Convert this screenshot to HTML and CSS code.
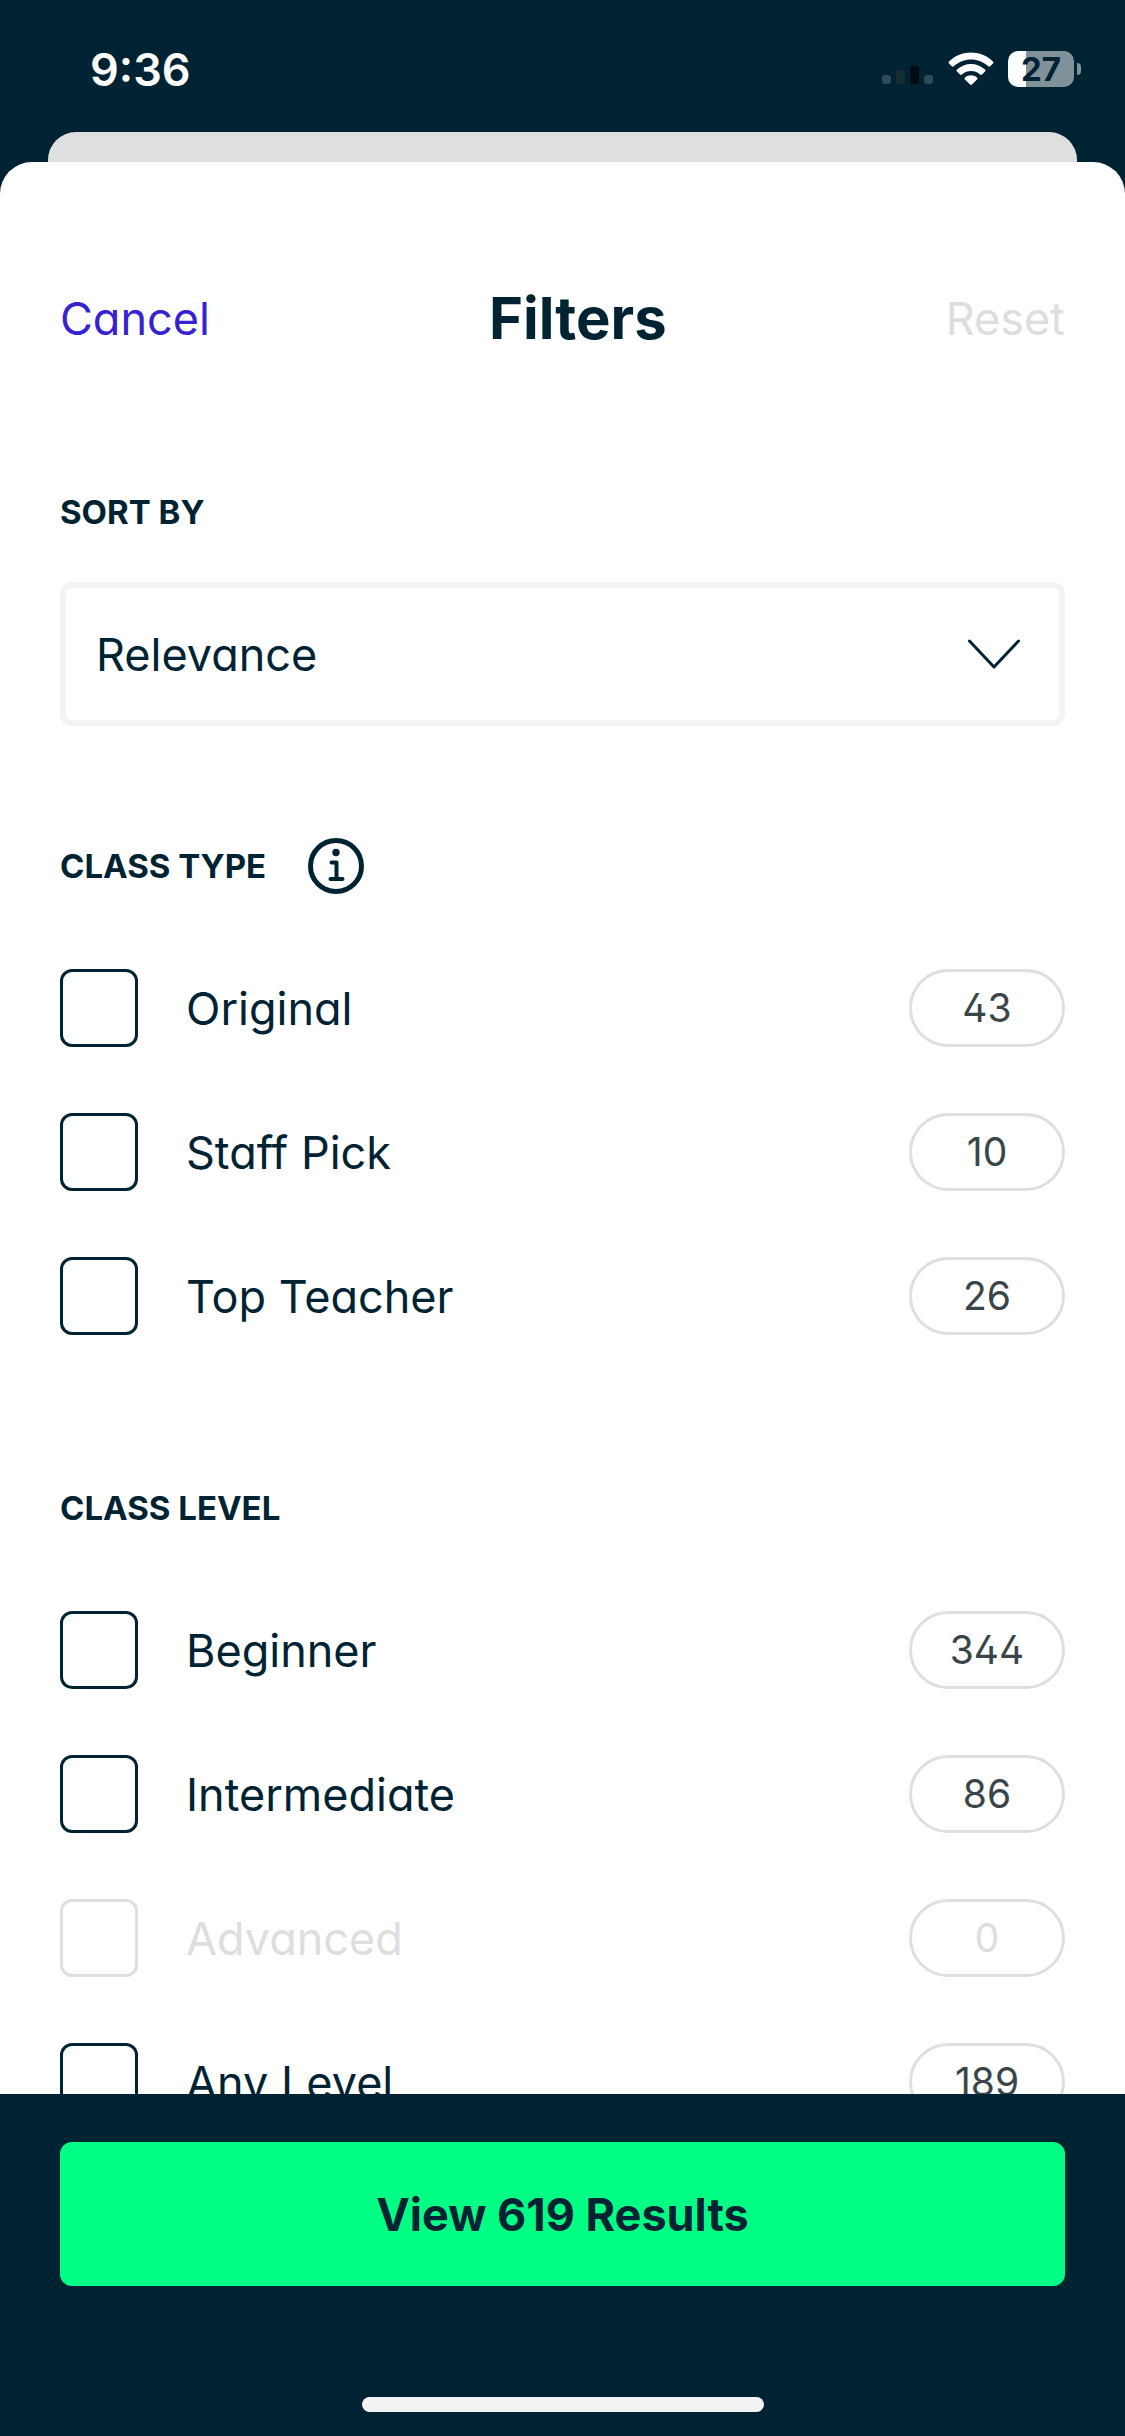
FILE: index.html
```html
<!DOCTYPE html>
<html lang="en">
<head>
  <meta charset="UTF-8">
  <meta name="viewport" content="width=device-width, initial-scale=1.0">
  <title>Filters</title>
  <link rel="stylesheet" href="styles.css">
</head>
<body>
  <div class="status-bar">
    <span class="time">9:36</span>
    <div class="status-icons">
      <svg class="signal" width="52" height="34" viewBox="0 0 52 34" aria-hidden="true">
        <rect x="0" y="23" width="9" height="9" rx="3" fill="#2b4a5b"/>
        <rect x="14" y="18" width="9" height="14" rx="3" fill="#182c34"/>
        <rect x="28" y="14" width="9" height="18" rx="3" fill="#000c14"/>
        <rect x="42" y="23" width="9" height="9" rx="3" fill="#2b4a5b"/>
      </svg>
      <svg class="wifi" width="46" height="34" viewBox="0 0 46 34" aria-hidden="true">
        <path d="M1 9.5C13-2.5 33-2.5 45 9.5c.6.6.6 1.400 0 2l-2.800 2.800c-.6.6-1.300.6-1.900 0C30.700 5.100 15.300 5.100 5.700 14.300c-.6.6-1.300.6-1.900 0L1 11.500c-.6-.6-.6-1.400 0-2z"/>
        <path d="M9 17.600c7.800-7.500 20.200-7.500 28 0 .6.6.6 1.300 0 1.900l-3 3c-.6.6-1.300.5-1.900 0-5.200-4.600-13-4.600-18.200 0-.6.5-1.300.6-1.900 0l-3-3c-.6-.6-.6-1.300 0-1.900z"/>
        <path d="M17 25.600c3.400-3 8.600-3 12 0 .6.600.600 1.200.1 1.800l-5.200 5.200c-.6.6-1.200.6-1.800 0l-5.200-5.200c-.5-.6-.5-1.200.1-1.800z"/>
      </svg>
      <div class="battery">
        <span class="battery-level">27</span>
        <span class="battery-cap"></span>
      </div>
    </div>
  </div>

  <div class="back-card"></div>

  <main class="sheet">
    <header class="sheet-header">
      <button class="link-btn" type="button">Cancel</button>
      <h1>Filters</h1>
      <button class="link-btn" type="button" disabled>Reset</button>
    </header>

    <section class="sort-by">
      <h2 class="section-title"><label for="sort">SORT BY</label></h2>
      <div class="select-box">
        <select id="sort">
          <option selected>Relevance</option>
          <option>Newest</option>
          <option>Popular</option>
        </select>
        <svg class="chevron" width="54" height="32" viewBox="0 0 54 32" aria-hidden="true">
          <path d="M2.500 3L27 29L51.500 3"/>
        </svg>
      </div>
    </section>

    <section class="option-group">
      <h2 class="section-title">
        CLASS TYPE
        <button class="info-btn" type="button" aria-label="About class types">
          <svg width="56" height="56" viewBox="0 0 56 56" aria-hidden="true">
            <circle cx="28" cy="28" r="25.500" fill="none" stroke="currentColor" stroke-width="5"/>
            <circle cx="28" cy="14.500" r="3.700" fill="currentColor"/>
            <path d="M23.500 24.500H28.500V41M22.500 41H34.500" fill="none" stroke="currentColor" stroke-width="4" stroke-linecap="round" stroke-linejoin="round"/>
          </svg>
        </button>
      </h2>
      <ul class="options">
        <li>
          <input type="checkbox" id="original">
          <label for="original">Original</label>
          <span class="count">43</span>
        </li>
        <li>
          <input type="checkbox" id="staff-pick">
          <label for="staff-pick">Staff Pick</label>
          <span class="count">10</span>
        </li>
        <li>
          <input type="checkbox" id="top-teacher">
          <label for="top-teacher">Top Teacher</label>
          <span class="count">26</span>
        </li>
      </ul>
    </section>

    <section class="option-group">
      <h2 class="section-title">CLASS LEVEL</h2>
      <ul class="options">
        <li>
          <input type="checkbox" id="beginner">
          <label for="beginner">Beginner</label>
          <span class="count">344</span>
        </li>
        <li>
          <input type="checkbox" id="intermediate">
          <label for="intermediate">Intermediate</label>
          <span class="count">86</span>
        </li>
        <li class="disabled">
          <input type="checkbox" id="advanced" disabled>
          <label for="advanced">Advanced</label>
          <span class="count">0</span>
        </li>
        <li>
          <input type="checkbox" id="any-level">
          <label for="any-level">Any Level</label>
          <span class="count">189</span>
        </li>
      </ul>
    </section>
  </main>

  <footer class="footer">
    <button class="view-btn" type="button">View 619 Results</button>
    <div class="home-indicator"></div>
  </footer>
</body>
</html>
```
FILE: styles.css
```css
* {
  box-sizing: border-box;
}
body {
  margin: 0;
  height: 100vh;
  display: flex;
  flex-direction: column;
  overflow: hidden;
  background: #002333;
  color: #002333;
  font-family: Inter, "Liberation Sans", sans-serif;
  font-size: 45px;
  /* single-storey a, open four */
  font-feature-settings: "cv11", "cv02";
}
h1, h2, ul {
  margin: 0;
  padding: 0;
}
button, select {
  font: inherit;
  font-feature-settings: inherit;
  color: inherit;
  border: 0;
  padding: 0;
  background: none;
  cursor: pointer;
}

/* status bar */
.status-bar {
  flex: none;
  display: flex;
  justify-content: space-between;
  align-items: center;
  height: 132px;
  padding: 6px 44px 0 90px;
  color: #fff;
}
.time {
  font-weight: 600;
}
.status-icons {
  display: flex;
  align-items: center;
  gap: 14px;
}
.wifi {
  fill: #fff;
}
.battery {
  display: flex;
  align-items: center;
  gap: 3px;
}
.battery-level {
  width: 66px;
  height: 36px;
  border-radius: 10px;
  background: linear-gradient(to right, #fff 18px, #80919a 18px);
  color: #002333;
  font-size: 33px;
  font-weight: 700;
  line-height: 36px;
  text-align: center;
}
.battery-cap {
  width: 4px;
  height: 12px;
  border-radius: 0 4px 4px 0;
  background: #80919a;
}

/* sheet */
.back-card {
  flex: none;
  height: 30px;
  margin: 0 48px;
  border-radius: 28px 28px 0 0;
  background: #dfdfdf;
}
.sheet {
  flex: 1;
  min-height: 0;
  overflow-x: hidden;
  overflow-y: auto;
  scrollbar-width: none;
  padding: 120px 60px 0;
  border-radius: 32px 32px 0 0;
  background: #fff;
}
.sheet-header {
  display: flex;
  justify-content: space-between;
  align-items: center;
  margin-bottom: 130px;
}
.sheet-header h1 {
  font-size: 58px;
  line-height: 72px;
}
.link-btn {
  color: #3722d3;
}
.link-btn:disabled {
  color: #dcdedf;
  cursor: default;
}
.section-title {
  display: flex;
  align-items: center;
  gap: 42px;
  font-size: 33px;
  line-height: 56px;
}
.info-btn {
  display: flex;
}

/* sort */
.sort-by {
  margin-bottom: 112px;
}
.select-box {
  display: grid;
  align-items: center;
  margin-top: 42px;
}
.select-box select {
  grid-area: 1 / 1;
  width: 100%;
  height: 144px;
  padding: 0 30px;
  border: 6px solid #f3f3f3;
  border-radius: 12px;
  appearance: none;
}
.chevron {
  grid-area: 1 / 1;
  justify-self: end;
  margin-right: 44px;
  fill: none;
  stroke: #002333;
  stroke-width: 3;
  stroke-linecap: round;
  stroke-linejoin: round;
  pointer-events: none;
}

/* checkboxes */
.option-group {
  margin-bottom: 145px;
}
.options {
  display: flex;
  flex-direction: column;
  gap: 66px;
  margin-top: 75px;
  list-style: none;
}
.options li {
  display: flex;
  align-items: center;
  gap: 48px;
}
.options input {
  flex: none;
  width: 78px;
  height: 78px;
  margin: 0;
  border: 3px solid #002333;
  border-radius: 12px;
  appearance: none;
}
.options input:checked {
  background: #002333;
}
.options label {
  flex: 1;
}
.count {
  width: 156px;
  border: 3px solid #dfdfdf;
  border-radius: 39px;
  color: #394649;
  font-size: 39px;
  line-height: 72px;
  text-align: center;
}
.disabled, .disabled .count {
  color: #dcdedf;
}
.disabled input {
  border-color: #dfdfdf;
}

/* footer */
.footer {
  flex: none;
  padding: 48px 60px 24px;
  background: #002333;
}
.view-btn {
  width: 100%;
  height: 144px;
  border-radius: 12px;
  background: #00ff84;
  font-weight: 700;
}
.home-indicator {
  width: 40%;
  height: 15px;
  margin: 111px auto 0;
  border-radius: 8px;
  background: #f3f3f3;
}
```
